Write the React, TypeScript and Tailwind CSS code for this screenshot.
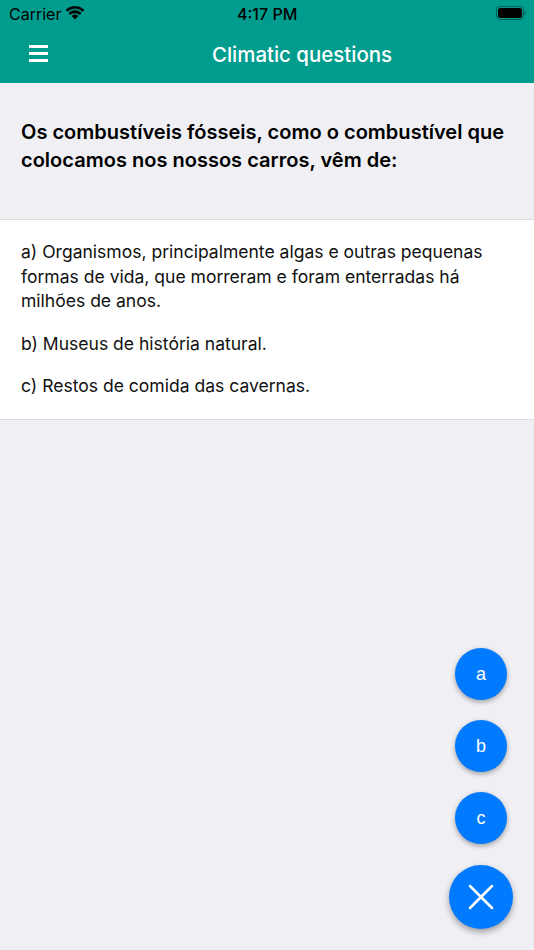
import React from "react";

function Fab({ label }: { label: string }) {
  return (
    <button className="w-[52px] h-[52px] rounded-full bg-[#007aff] text-white text-[18px] flex items-center justify-center shadow-[0_2px_5px_rgba(0,0,0,0.35)] font-['Liberation_Sans',sans-serif]">
      {label}
    </button>
  );
}

export default function App() {
  return (
    <div className="relative w-[534px] h-[950px] overflow-hidden bg-[#efeff4] font-['Inter',sans-serif] flex flex-col">
      <header className="bg-[#009d8f] h-[83px] shrink-0 flex flex-col">
        <div className="h-[27px] relative flex items-center justify-between pl-[9px] pr-[9px] text-black">
          <div className="flex items-center gap-[5px]">
            <span className="text-[16px] leading-none">Carrier</span>
            <svg width="20" height="15" viewBox="0 0 20 15" fill="#000" stroke="#000" strokeWidth="0.4" className="-ml-[1px]">
              <path d="M10 2.6c3 0 5.6 1.1 7.6 3l1.6-1.7C16.8 1.600 13.600.2 10 .2S3.200 1.600.8 3.900l1.600 1.700c2-1.900 4.600-3 7.600-3z" />
              <path d="M10 6.900c1.800 0 3.400.7 4.600 1.800l1.700-1.700C14.600 5.400 12.400 4.400 10 4.400S5.400 5.400 3.700 7l1.700 1.700c1.200-1.100 2.800-1.800 4.600-1.800z" />
              <path d="M10 8.800c-1.200 0-2.300.5-3.100 1.200L10 13.300l3.100-3.300c-.8-.7-1.900-1.200-3.100-1.200z" />
            </svg>
          </div>
          <span className="absolute left-[237px] text-[16px] font-medium leading-none">4:17 PM</span>
          <svg width="30" height="15" viewBox="0 0 30 15" className="mr-[-1px]">
            <rect x="0.5" y="0.5" width="27" height="13" rx="3.500" fill="none" stroke="#00000066" strokeWidth="1" />
            <rect x="2" y="2" width="24" height="10" rx="2.500" fill="#000" />
            <path d="M28.500 5c.8.300 1.200 1.100 1.200 2s-.4 1.700-1.200 2z" fill="#00000066" />
          </svg>
        </div>
        <div className="flex-1 relative flex items-center justify-center pl-[70px]">
          <div className="absolute left-[29px] top-[18px] w-[19px] flex flex-col gap-[4px]">
            <span className="h-[3px] bg-white block" />
            <span className="h-[3px] bg-white block" />
            <span className="h-[3px] bg-white block" />
          </div>
          <h1 className="text-white text-[20.450px] font-medium leading-none">Climatic questions</h1>
        </div>
      </header>

      <section className="h-[136px] shrink-0 px-[21px] pt-[35px] text-black">
        <p className="text-[20.040px] font-semibold leading-[28px]">
          Os combustíveis fósseis, como o combustível que colocamos nos nossos carros, vêm de:
        </p>
      </section>

      <section className="bg-white border-y border-[#dcdce0] h-[201px] shrink-0 px-[21px] pt-[20px] text-[17.550px] leading-[24.500px] text-[#111]">
        <p>a) Organismos, principalmente algas e outras pequenas formas de vida, que morreram e foram enterradas há milhões de anos.</p>
        <p className="mt-[18px]">b) Museus de história natural.</p>
        <p className="mt-[18px]">c) Restos de comida das cavernas.</p>
      </section>

      <div className="absolute right-[21px] bottom-[21px] flex flex-col items-center gap-[20px]">
        <div className="flex flex-col items-center gap-[20px] -mb-[-1px]">
          <Fab label="a" />
          <Fab label="b" />
          <Fab label="c" />
        </div>
        <button className="w-[64px] h-[64px] rounded-full bg-[#007aff] flex items-center justify-center shadow-[0_3px_6px_rgba(0,0,0,0.35)]">
          <svg width="28" height="28" viewBox="0 0 28 28" fill="none" stroke="#fff" strokeWidth="2.500" strokeLinecap="round">
            <path d="M3 3 L25 25 M25 3 L3 25" />
          </svg>
        </button>
      </div>
    </div>
  );
}
